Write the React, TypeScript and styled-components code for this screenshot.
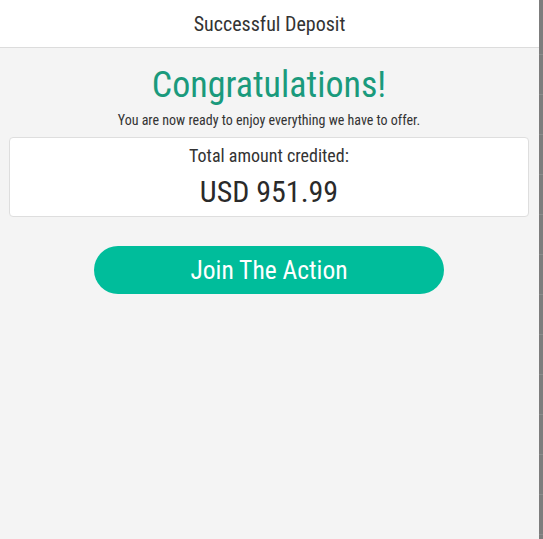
import styled, { createGlobalStyle } from "styled-components";

const GlobalStyle = createGlobalStyle`
  html, body {
    margin: 0;
    padding: 0;
    height: 100%;
    background: #f4f4f4;
  }
  #root {
    height: 100%;
  }
  * {
    box-sizing: border-box;
  }
`;

const Page = styled.div`
  display: flex;
  height: 539px;
  width: 543px;
  overflow: hidden;
  font-family: "Roboto Condensed", "Liberation Sans Narrow", Roboto, sans-serif;
  font-stretch: 75%;
  color: #333;
`;

const Modal = styled.div`
  display: flex;
  flex-direction: column;
  width: 539px;
  flex-shrink: 0;
  background: #f4f4f4;
`;

const Header = styled.div`
  height: 48px;
  background: #fff;
  border-bottom: 1px solid #dcdcdc;
  display: flex;
  align-items: center;
  justify-content: center;
  padding-top: 1px;
  font-size: 20px;
  color: #333;
`;

const Body = styled.div`
  display: flex;
  flex-direction: column;
  align-items: center;
  padding: 15px 10px 0 9px;
`;

const Title = styled.h1`
  margin: 0;
  font-size: 36px;
  font-weight: 400;
  line-height: 44px;
  color: #1a9a7c;
`;

const Subtitle = styled.p`
  margin: 5px 0 0;
  font-size: 14px;
  line-height: 16px;
`;

const Card = styled.div`
  margin-top: 9px;
  width: 100%;
  height: 80px;
  background: #fff;
  border: 1px solid #dedede;
  border-radius: 4px;
  display: flex;
  flex-direction: column;
  align-items: center;
  padding-top: 7px;
`;

const CardLabel = styled.div`
  font-size: 18px;
  line-height: 22px;
`;

const Amount = styled.div`
  margin-top: 7px;
  font-size: 30px;
  line-height: 36px;
  color: #2a2a2a;
`;

const ActionButton = styled.button`
  margin-top: 29px;
  width: 350px;
  height: 48px;
  border: none;
  border-radius: 24px;
  background: #00bd9b;
  color: #fff;
  font-family: inherit;
  font-stretch: inherit;
  font-size: 25.5px;
  cursor: pointer;
`;

const Backdrop = styled.div`
  width: 4px;
  flex-shrink: 0;
  background-color: #7d7d7d;
  background-image: repeating-linear-gradient(
    to bottom,
    #7d7d7d 0,
    #7d7d7d 39px,
    #8c8c8c 39px,
    #8c8c8c 40px
  );
  background-position: 0 15px;
`;

export default function App() {
  return (
    <>
      <GlobalStyle />
      <Page>
        <Modal>
          <Header>Successful Deposit</Header>
          <Body>
            <Title>Congratulations!</Title>
            <Subtitle>You are now ready to enjoy everything we have to offer.</Subtitle>
            <Card>
              <CardLabel>Total amount credited:</CardLabel>
              <Amount>USD 951.99</Amount>
            </Card>
            <ActionButton>Join The Action</ActionButton>
          </Body>
        </Modal>
        <Backdrop />
      </Page>
    </>
  );
}
